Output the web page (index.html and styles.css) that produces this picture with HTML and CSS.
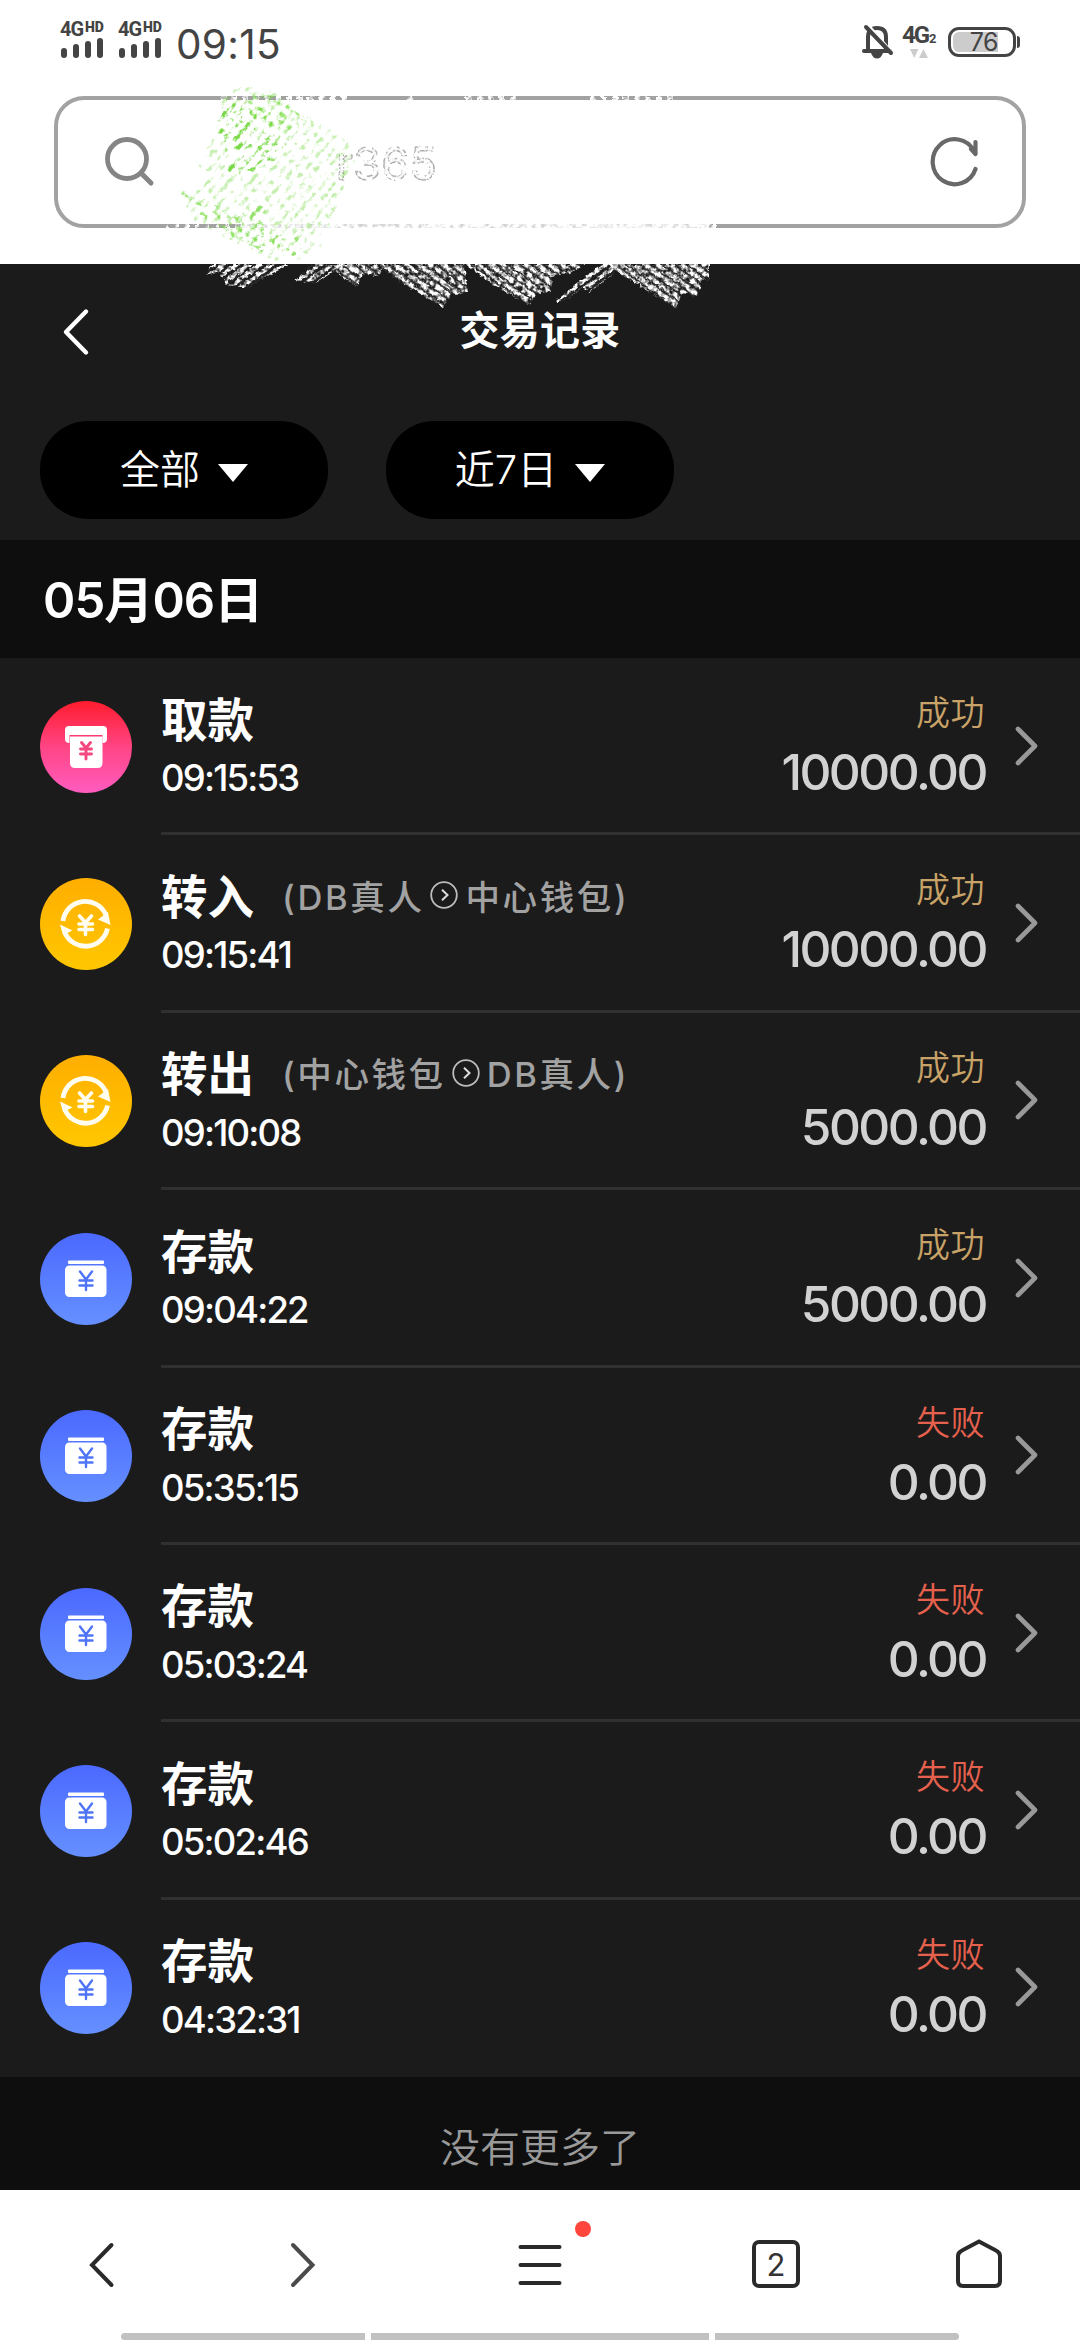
FILE: index.html
```html
<!DOCTYPE html>
<html lang="zh-CN">
<head>
<meta charset="utf-8">
<title>交易记录</title>
<link rel="stylesheet" href="styles.css">
</head>
<body>
<svg class="defs" width="0" height="0" aria-hidden="true">
  <defs>
    <linearGradient id="pink" x1="0" y1="0" x2="0" y2="1"><stop offset="0" stop-color="#ff1c2e"/><stop offset=".5" stop-color="#ff4584"/><stop offset="1" stop-color="#ff5cc0"/></linearGradient>
    <linearGradient id="gold" x1="0" y1="0" x2="0" y2="1"><stop offset="0" stop-color="#ffae00"/><stop offset="1" stop-color="#ffc700"/></linearGradient>
    <linearGradient id="blue" x1="0" y1="0" x2="0" y2="1"><stop offset="0" stop-color="#4b69ff"/><stop offset="1" stop-color="#6590ff"/></linearGradient>
  </defs>
  <symbol id="withdraw" viewBox="0 0 92 92">
    <circle cx="46" cy="46" r="46" fill="url(#pink)"/>
    <path d="M29 25H63Q67 25 67 29V38Q67 42 62.500 42V34H29.500V42Q25 42 25 38V29Q25 25 29 25Z" fill="#fff"/>
    <path d="M30 35.500H62.500V62Q62.500 67 57.500 67H35Q30 67 30 62Z" fill="#fff"/>
    <path d="M41.500 41.500L46 47L50.500 41.500M46 47V58M40.500 48H51.500M40.500 53H51.500" fill="none" stroke="#f6477f" stroke-width="2.900" stroke-linecap="round"/>
  </symbol>
  <symbol id="transfer" viewBox="0 0 92 92">
    <circle cx="46" cy="46" r="46" fill="url(#gold)"/>
    <path d="M23 43A22.500 22.500 0 0 1 66 37M67.500 50.500A22.500 22.500 0 0 1 25 55" fill="none" stroke="#fffdf0" stroke-width="4.800"/>
    <path d="M68 34L70.500 47L58 41.500ZM20 46.500L32.500 52.500L23 57Z" fill="#fffdf0"/>
    <path d="M39.500 38L45.500 44.500L51.500 38M45.500 44V56.500M39 46H52.500M39 51.500H52.500" fill="none" stroke="#fffdf0" stroke-width="3.600" stroke-linecap="round"/>
  </symbol>
  <symbol id="deposit" viewBox="0 0 92 92">
    <circle cx="46" cy="46" r="46" fill="url(#blue)"/>
    <rect x="28" y="27.500" width="36" height="3.500" rx="1" fill="#fff"/>
    <rect x="25" y="32.500" width="41.500" height="31.500" rx="4.500" fill="#fff"/>
    <path d="M40 38.500L46 46.500L52 38.500M46 46.500V57M39.500 47.500H52.500M39.500 52.500H52.500" fill="none" stroke="#4f74f5" stroke-width="2.400" stroke-linecap="round"/>
  </symbol>
  <symbol id="next" viewBox="0 0 26 42"><path d="M4 4L21 21L4 38" fill="none" stroke="#999" stroke-width="4.600" stroke-linecap="round" stroke-linejoin="round"/></symbol>
  <symbol id="to" viewBox="0 0 28 28"><circle cx="14" cy="14" r="12.800" fill="none" stroke="#bcbcbc" stroke-width="1.800"/><path d="M12 8.800L17.500 14L12 19.200" fill="none" stroke="#ddd" stroke-width="2"/></symbol>
  <symbol id="bars" viewBox="0 0 44 21"><path d="M3 14V18M15 10V18M27 7V18M39 4V18" stroke="#444" stroke-width="6" stroke-linecap="round"/></symbol>
</svg>

<div class="screen">
  <header class="status">
    <div class="sim"><div class="net"><b>4G</b><sup>HD</sup></div><svg class="bars"><use href="#bars"/></svg></div>
    <div class="sim"><div class="net"><b>4G</b><sup>HD</sup></div><svg class="bars"><use href="#bars"/></svg></div>
    <span class="clock">09:15</span>
    <svg class="bell" viewBox="0 0 32 36"><path d="M6 26V13Q6 4 15 4Q24 4 24 13V26" fill="none" stroke="#444" stroke-width="4"/><path d="M2 27H28" stroke="#444" stroke-width="4" stroke-linecap="round"/><path d="M9 29H21Q19 34.500 15 34.500Q11 34.500 9 29Z" fill="#444"/><path d="M7 2L31 30" stroke="#fff" stroke-width="3"/><path d="M4 3L29 29" stroke="#444" stroke-width="4" stroke-linecap="round"/></svg>
    <div class="data"><div class="data-net"><b>4G</b><sub>2</sub></div><svg viewBox="0 0 18 10"><path d="M0 1H8.500L4.200 10Z" fill="#ccc"/><path d="M9 10H18L13.500 1Z" fill="#ccc"/></svg></div>
    <div class="battery"><span>76</span></div>
    <i class="battery-tip"></i>
  </header>

  <div class="address">
    <svg class="search" viewBox="0 0 50 50"><circle cx="22" cy="22" r="19.500" fill="none" stroke="#858585" stroke-width="4.800"/><path d="M36 36L46 46" stroke="#858585" stroke-width="5" stroke-linecap="round"/></svg>
    <svg class="url" viewBox="0 0 300 60">
      <defs><filter id="wear" x="0" y="0" width="1" height="1"><feTurbulence type="fractalNoise" baseFrequency=".28" numOctaves="2" seed="4"/><feColorMatrix values="0 0 0 0 0  0 0 0 0 0  0 0 0 0 0  0 7 0 0 -3"/><feComposite in="SourceGraphic" operator="in"/></filter></defs>
      <g filter="url(#wear)"><rect width="300" height="60" fill="none"/><text x="160" y="48" class="url-text">r365</text></g>
    </svg>
    <svg class="reload" viewBox="0 0 50 52"><path d="M46.500 33A22 22.500 0 1 1 45 15L46.500 18V6M46.500 18L42 13" fill="none" stroke="#686868" stroke-width="4.200" stroke-linecap="round" stroke-linejoin="round"/></svg>
  </div>

  <main class="app">
    <div class="titlebar">
      <svg class="back" viewBox="0 0 30 50"><path d="M25 4.500L5 25L25 45.500" fill="none" stroke="#fff" stroke-width="4.400" stroke-linecap="round" stroke-linejoin="round"/></svg>
      <h1>交易记录</h1>
    </div>
    <div class="filters">
      <button class="pill">全部<svg viewBox="0 0 30 18"><path d="M0 0H30L15 18Z" fill="#fff"/></svg></button>
      <button class="pill">近7日<svg viewBox="0 0 30 18"><path d="M0 0H30L15 18Z" fill="#fff"/></svg></button>
    </div>
    <h2 class="date">05月06日</h2>
    <ul class="list">
      <li class="row"><svg class="kind"><use href="#withdraw"/></svg><div class="body"><div class="info"><div class="name">取款</div><time>09:15:53</time></div><div class="sum"><span class="ok">成功</span><strong>10000.00</strong></div><svg class="next"><use href="#next"/></svg></div></li>
      <li class="row"><svg class="kind"><use href="#transfer"/></svg><div class="body"><div class="info"><div class="name">转入<small>(DB真人<svg><use href="#to"/></svg>中心钱包)</small></div><time>09:15:41</time></div><div class="sum"><span class="ok">成功</span><strong>10000.00</strong></div><svg class="next"><use href="#next"/></svg></div></li>
      <li class="row"><svg class="kind"><use href="#transfer"/></svg><div class="body"><div class="info"><div class="name">转出<small>(中心钱包<svg><use href="#to"/></svg>DB真人)</small></div><time>09:10:08</time></div><div class="sum"><span class="ok">成功</span><strong>5000.00</strong></div><svg class="next"><use href="#next"/></svg></div></li>
      <li class="row"><svg class="kind"><use href="#deposit"/></svg><div class="body"><div class="info"><div class="name">存款</div><time>09:04:22</time></div><div class="sum"><span class="ok">成功</span><strong>5000.00</strong></div><svg class="next"><use href="#next"/></svg></div></li>
      <li class="row"><svg class="kind"><use href="#deposit"/></svg><div class="body"><div class="info"><div class="name">存款</div><time>05:35:15</time></div><div class="sum"><span class="fail">失败</span><strong>0.00</strong></div><svg class="next"><use href="#next"/></svg></div></li>
      <li class="row"><svg class="kind"><use href="#deposit"/></svg><div class="body"><div class="info"><div class="name">存款</div><time>05:03:24</time></div><div class="sum"><span class="fail">失败</span><strong>0.00</strong></div><svg class="next"><use href="#next"/></svg></div></li>
      <li class="row"><svg class="kind"><use href="#deposit"/></svg><div class="body"><div class="info"><div class="name">存款</div><time>05:02:46</time></div><div class="sum"><span class="fail">失败</span><strong>0.00</strong></div><svg class="next"><use href="#next"/></svg></div></li>
      <li class="row"><svg class="kind"><use href="#deposit"/></svg><div class="body"><div class="info"><div class="name">存款</div><time>04:32:31</time></div><div class="sum"><span class="fail">失败</span><strong>0.00</strong></div><svg class="next"><use href="#next"/></svg></div></li>
    </ul>
    <p class="end">没有更多了</p>
  </main>

  <nav class="tabs">
    <svg class="nav-back" viewBox="0 0 26 46"><path d="M22.500 3L3 23L22.500 43" fill="none" stroke="#2a2a2a" stroke-width="4" stroke-linecap="round"/></svg>
    <svg class="nav-next" viewBox="0 0 26 46"><path d="M3 3L22.500 23L3 43" fill="none" stroke="#4a4a4a" stroke-width="4" stroke-linecap="round"/></svg>
    <div class="menu"><svg viewBox="0 0 44 42"><path d="M2.500 3H41.500M2.500 21H41.500M2.500 39H41.500" stroke="#2a2a2a" stroke-width="4" stroke-linecap="round"/></svg><i class="dot"></i></div>
    <div class="count">2</div>
    <svg class="home" viewBox="0 0 46 50"><path d="M23 2.500L40 11.500Q44 13.500 44 17V42Q44 47 39 47H7Q2 47 2 42V17Q2 13.500 6 11.500Z" fill="none" stroke="#2a2a2a" stroke-width="4"/></svg>
  </nav>
  <div class="gesture"><i></i><i></i><i></i></div>

  <svg class="scribble" viewBox="0 0 1080 340">
    <defs>
      <filter id="chalk" x="0" y="0" width="1080" height="340" filterUnits="userSpaceOnUse"><feTurbulence type="fractalNoise" baseFrequency=".22" numOctaves="2" seed="7" result="n"/><feDisplacementMap in="SourceGraphic" in2="n" scale="5" xChannelSelector="R" yChannelSelector="G" result="d"/><feColorMatrix in="n" values="0 0 0 0 0  0 0 0 0 0  0 0 0 0 0  0 0 3 0 -.700"/><feComposite in="d" operator="in"/></filter>
      <filter id="crayon" x="0" y="0" width="1080" height="340" filterUnits="userSpaceOnUse"><feTurbulence type="fractalNoise" baseFrequency=".14" numOctaves="3" seed="11" result="n"/><feDisplacementMap in="SourceGraphic" in2="n" scale="5" xChannelSelector="R" yChannelSelector="G" result="d"/><feColorMatrix in="n" values="0 0 0 0 0  0 0 0 0 0  0 0 0 0 0  0 0 5 0 -2.300"/><feComposite in="d" operator="in"/></filter>
      <pattern id="rise" width="12" height="7" patternUnits="userSpaceOnUse" patternTransform="rotate(-36)"><path d="M0 3H12" stroke="#fff" stroke-width="4.200"/></pattern>
      <pattern id="fall" width="12" height="7" patternUnits="userSpaceOnUse" patternTransform="rotate(36)"><path d="M0 3H12" stroke="#fff" stroke-width="4.800"/></pattern>
      <pattern id="leaf" width="12" height="8" patternUnits="userSpaceOnUse" patternTransform="rotate(-48)"><path d="M0 4H12" stroke="#6ed636" stroke-width="3.600"/></pattern>
      <pattern id="stem" width="12" height="8" patternUnits="userSpaceOnUse" patternTransform="rotate(32)"><path d="M0 3H12" stroke="#7cde48" stroke-width="3.200"/></pattern>
    </defs>
    <g filter="url(#chalk)">
      <path fill="url(#rise)" d="M212 264L205 275L218 272L226 285L248 288L262 278L292 264ZM312 264L295 280L316 283L345 264ZM600 264L555 302L562 302L618 264ZM616 264L580 288L590 292L626 264Z"/>
      <path fill="url(#fall)" d="M328 264L343 278L357 286L362 274L378 276L386 264ZM376 264L400 282L443 307L452 294L468 293L464 264ZM464 264L492 284L530 306L536 293L551 292L552 276L568 274L585 264ZM606 264L640 286L676 308L682 292L697 296L702 280L709 280V264Z"/>
      <path d="M220 98H350M408 101L414 96M466 98H520M590 98H673" stroke="#fff" stroke-width="4" stroke-dasharray="6 5"/>
      <path d="M165 226H240" stroke="#fff" stroke-width="4" stroke-dasharray="4 6"/>
      <path d="M238 226H716" stroke="#fff" stroke-width="6"/>
    </g>
    <path d="M244 226H708" stroke="#fff" stroke-width="4" opacity=".5"/>
    <g filter="url(#crayon)">
      <path opacity=".42" fill="url(#leaf)" d="M228 89L262 86L346 140L355 158L320 250L300 258L276 262L196 222L178 191L204 190L198 165L214 136L222 106Z"/>
      <path opacity=".9" fill="url(#leaf)" d="M228 102L275 112L286 148L260 170L222 174L226 145L214 136Z"/>
      <path opacity=".75" fill="url(#stem)" d="M250 92L284 98L315 122L278 132L245 112ZM178 190L215 204L265 225L285 262L240 240L198 213Z"/>
      <path opacity=".6" fill="url(#leaf)" d="M228 215L268 203L262 224L310 243L300 254L275 258L225 228Z"/>
    </g>
  </svg>
</div>
</body>
</html>
```
FILE: styles.css
```css
* { box-sizing: border-box; margin: 0; padding: 0; }
body { background: #fff; font-family: Inter, "Noto Sans CJK SC", sans-serif; }
svg { display: block; flex: none; }
i { display: block; }
.defs { position: absolute; }
.screen { position: relative; width: 1080px; height: 2340px; display: flex; flex-direction: column; overflow: hidden; }

.status { height: 96px; flex: none; display: flex; align-items: flex-start; padding: 21px 0 0 60px; color: #444; }
.sim { width: 58px; }
.net { display: flex; height: 17px; font-family: Roboto, sans-serif; line-height: 17px; }
.net b { font-size: 20px; letter-spacing: -1px; width: 25px; }
.net sup { font-size: 14px; font-weight: 900; line-height: 12px; }
.bars { width: 44px; height: 21px; margin-top: -1px; margin-left: 1px; }
.clock { font-size: 40.500px; line-height: 48px; letter-spacing: .300px; margin-left: 0; flex: 1; }
.bell { width: 32px; height: 36px; margin-top: 3px; }
.data { width: 36px; margin: 4px 0 0 8px; }
.data-net { display: flex; height: 20px; line-height: 20px; font-family: Roboto, sans-serif; }
.data-net b { font-size: 24px; font-weight: 700; letter-spacing: -2px; width: 27px; }
.data-net sub { font-size: 13px; font-weight: 700; line-height: 28px; }
.data svg { width: 18px; height: 10px; margin: 3px 0 0 8px; }
.battery { width: 68px; height: 30px; margin: 6px 0 0 10px; border: 3px solid #444; border-radius: 11px; padding: 2px; }
.battery span { display: block; width: 45px; height: 20px; background: #ccc; border-radius: 6px 0 0 6px; text-align: right; font-size: 25px; line-height: 20px; letter-spacing: -.500px; }
.battery-tip { width: 3px; height: 12px; margin: 15px 60px 0 1px; background: #444; border-radius: 0 3px 3px 0; }

.address { width: 972px; height: 132px; flex: none; margin: 0 0 36px 54px; border: 4px solid #a2a2a2; border-radius: 30px; display: flex; align-items: center; padding: 0 43px 0 47px; }
.search { width: 50px; height: 50px; }
.url { width: 300px; height: 60px; margin-left: 21px; }
.url-text { font-size: 45px; letter-spacing: .300px; fill: #f4f4f4; stroke: #b0b0b0; stroke-width: 1.500px; }
.reload { width: 50px; height: 52px; margin-left: auto; }

.app { height: 1926px; flex: none; background: #0e0e0e; color: #fff; }
.titlebar { height: 132px; background: #1b1b1b; display: grid; grid-template-columns: 180px 1fr 180px; align-items: center; }
.back { width: 30px; height: 50px; margin: 3px 0 0 61px; }
h1 { font-size: 40px; font-weight: 700; text-align: center; line-height: 60px; padding-top: 1px; letter-spacing: .300px; }
.filters { height: 144px; background: #1b1b1b; display: flex; gap: 58px; padding: 25px 40px 0; }
.pill { width: 288px; height: 98px; border: 0; border-radius: 48px; background: #000; color: #fff; font: 350 40px/60px Inter, "Noto Sans CJK SC", sans-serif; display: flex; align-items: center; justify-content: center; gap: 18px; }
.pill svg { width: 30px; height: 18px; margin-top: 5px; }
.date { height: 118px; line-height: 121px; padding-left: 43px; font-size: 49px; font-weight: 600; letter-spacing: -.900px; }

.list { list-style: none; background: #1b1b1b; height: 1419px; display: grid; grid-template-rows: repeat(8, 1fr); }
.row { display: flex; align-items: center; padding-left: 40px; }
.kind { width: 92px; height: 92px; margin-right: 29px; }
.body { flex: 1; height: 100%; display: flex; border-bottom: 3px solid #303030; padding-right: 40px; }
.row:last-child .body { border-color: transparent; }
.info { flex: 1; padding-top: 28px; }
.name { display: flex; align-items: center; height: 60px; font-size: 46.500px; font-weight: 700; white-space: nowrap; }
.name small { display: flex; align-items: center; margin-left: 28px; padding-top: 3px; color: #a2a2a2; font-size: 34.500px; font-weight: 500; letter-spacing: 2.600px; }
.name small svg { width: 28px; height: 28px; margin: 1px 7px 0 6px; }
time { display: block; height: 56px; line-height: 56px; margin-top: 4px; font-size: 36.500px; font-weight: 500; letter-spacing: -1.800px; }
.sum { display: flex; flex-direction: column; align-items: flex-end; padding-top: 31px; margin-right: 29px; }
.sum span { font-size: 34px; font-weight: 350; line-height: 48px; height: 48px; letter-spacing: .500px; }
.ok { color: #c9a267; }
.fail { color: #e5614e; }
.sum strong { font-size: 49.500px; font-weight: 500; line-height: 70px; height: 70px; letter-spacing: -2.500px; margin-right: -1px; color: #d2d2d2; }
.next { width: 26px; height: 42px; align-self: center; margin-top: 1px; }
.end { height: 113px; line-height: 56px; padding-top: 43px; text-align: center; font-size: 40px; font-weight: 350; color: #999; }

.tabs { height: 143px; flex: none; display: flex; align-items: flex-start; background: #fff; }
.nav-back { width: 26px; height: 46px; margin: 52px 0 0 89px; }
.nav-next { width: 26px; height: 46px; margin: 52px 0 0 175px; }
.menu { position: relative; width: 44px; height: 42px; margin: 54px 0 0 202px; }
.menu svg { width: 44px; height: 42px; }
.dot { position: absolute; left: 57px; top: -23px; width: 16px; height: 16px; border-radius: 50%; background: #ff453c; }
.count { width: 48px; height: 48px; margin: 50px 0 0 190px; border: 4px solid #2a2a2a; border-radius: 7px; font-size: 31px; line-height: 42px; text-align: center; color: #333; }
.home { width: 46px; height: 50px; margin: 49px 0 0 156px; }
.gesture { height: 7px; flex: none; display: grid; grid-template-columns: 244px 338px 244px; gap: 6px; padding-left: 121px; }
.gesture i { background: #c1c1c1; }
.gesture i:first-child { border-radius: 4px 0 0 4px; }
.gesture i:last-child { border-radius: 0 4px 4px 0; }
.scribble { position: absolute; left: 0; top: 0; width: 1080px; height: 340px; pointer-events: none; }
```
